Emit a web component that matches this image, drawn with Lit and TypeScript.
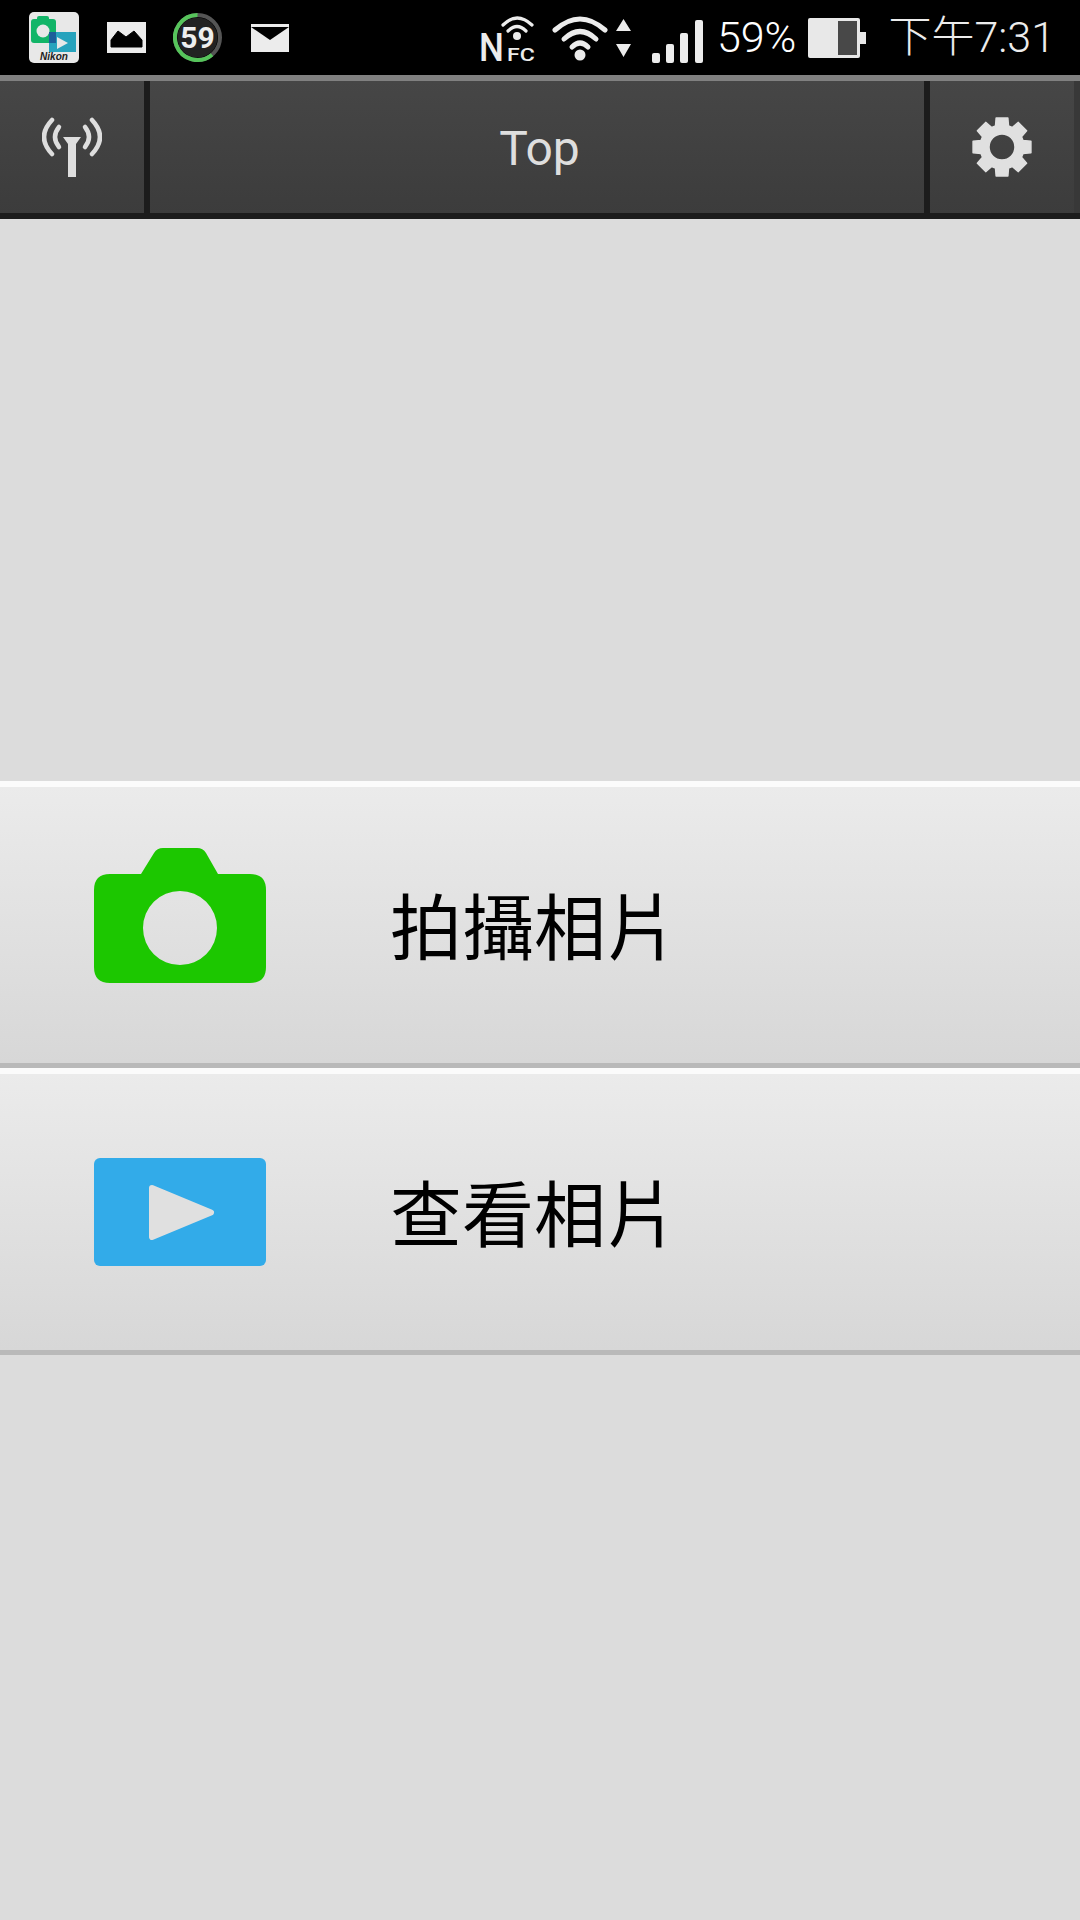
import { LitElement, html, css } from "lit";
import { customElement } from "lit/decorators.js";

function gearPath(cx: number, cy: number, ro: number, ri: number, hole: number) {
  const pts: string[] = [];
  const n = 8;
  for (let i = 0; i < n; i++) {
    const a = (i * 2 * Math.PI) / n - Math.PI / 2;
    const t = 0.2;
    const r = 0.3;
    const p = (rad: number, ang: number) =>
      `${(cx + rad * Math.cos(ang)).toFixed(2)} ${(cy + rad * Math.sin(ang)).toFixed(2)}`;
    pts.push(p(ri, a - r), p(ro, a - t), p(ro, a + t), p(ri, a + r));
  }
  return (
    `M${pts.join("L")}Z` +
    `M${cx - hole} ${cy}a${hole} ${hole} 0 1 0 ${hole * 2} 0a${hole} ${hole} 0 1 0 ${-hole * 2} 0Z`
  );
}

@customElement("app-root")
export class AppRoot extends LitElement {
  static styles = css`
    :host {
      display: flex;
      flex-direction: column;
      width: 1080px;
      height: 1920px;
      background: #dcdcdc;
      overflow: hidden;
      font-family: Roboto, "Noto Sans CJK TC", sans-serif;
    }
    .status {
      height: 75px;
      background: #000;
      display: flex;
      align-items: center;
      color: #ececec;
      flex: none;
    }
    .status svg { display: block; flex: none; }
    .nikon { margin-left: 29px; position: relative; width: 50px; height: 51px; flex: none; }
    .nikon-label {
      position: absolute;
      left: 0;
      right: 0;
      bottom: 1px;
      text-align: center;
      font: italic 700 10px/10px "Liberation Sans", sans-serif;
      color: #222;
    }
    .pic { margin-left: 28px; }
    .ring { margin-left: 27px; }
    .mail { margin-left: 29px; }
    .nfc { margin-left: auto; overflow: visible; }
    .wifi { margin-left: 18px; }
    .arrows { margin-left: 8px; }
    .signal { margin-left: 21px; margin-top: 8px; }
    .pct {
      margin-left: 14px;
      font-size: 43px;
      font-weight: 300;
      line-height: 75px;
      color: #fff;
    }
    .battery { margin-left: 12px; }
    .time {
      margin-left: 22px;
      margin-right: 25px;
      font-size: 43px;
      font-weight: 300;
      line-height: 75px;
    }
    .rule { height: 6px; background: #808080; flex: none; }
    .bar {
      height: 132px;
      border-bottom: 6px solid #1c1c1c;
      display: flex;
      flex: none;
      background: linear-gradient(#464646, #3c3c3c);
    }
    .bar svg { display: block; }
    .side { display: flex; align-items: center; justify-content: center; flex: none; }
    .side.left { width: 144px; border-right: 6px solid #1c1c1c; }
    .side.right { width: 144px; border-left: 6px solid #1c1c1c; border-right: 6px solid #383838; }
    .title {
      flex: 1;
      padding-left: 5px;
      text-align: center;
      font-size: 48px;
      line-height: 136px;
      color: #dedede;
    }
    .spacer { height: 562px; flex: none; }
    .row {
      height: 276px;
      border-top: 6px solid #fbfbfb;
      border-bottom: 5px solid #b9b9b9;
      background: linear-gradient(#ebebeb, #d7d7d7);
      display: flex;
      align-items: center;
      padding-left: 94px;
      flex: none;
    }
    .row svg { display: block; flex: none; }
    .label {
      margin-left: 124px;
      margin-bottom: 5px;
      font-family: "Noto Sans CJK TC", sans-serif;
      font-size: 72px;
      color: #000;
    }
  `;

  render() {
    return html`
      <div class="status">
        <div class="nikon">
          <svg width="50" height="51" viewBox="0 0 50 51">
            <rect width="50" height="51" rx="5" fill="#e8e8e8" />
            <rect x="2" y="7" width="25" height="24" rx="3" fill="#12b568" />
            <rect x="8" y="4" width="12" height="6" rx="2" fill="#12b568" />
            <circle cx="14" cy="19" r="6.5" fill="#e8e8e8" />
            <rect x="20" y="20" width="27" height="20" fill="#27a3bd" />
            <rect x="20" y="20" width="7" height="11" fill="#1c5f9a" />
            <path d="M28 25 L39 31 L28 37Z" fill="#e8e8e8" />
          </svg>
          <span class="nikon-label">Nikon</span>
        </div>
        <svg class="pic" width="39" height="31" viewBox="0 0 39 31">
          <rect width="39" height="31" fill="#ececec" />
          <path d="M4 25 V18 L11 9 L19 15 L27 9 L35 18 V25Z" fill="#000" stroke="#000" stroke-linejoin="round" />
        </svg>
        <svg class="ring" width="49" height="51" viewBox="0 0 49 51">
          <circle cx="24.5" cy="25.5" r="22.5" fill="none" stroke="#555" stroke-width="4" />
          <circle cx="24.5" cy="25.5" r="20" fill="#222" />
          <path d="M24.5 3 A22.5 22.5 0 1 0 39 42.7" fill="none" stroke="#56c45b" stroke-width="4" />
          <text x="24.5" y="36" text-anchor="middle" font-family="Roboto" font-weight="700" font-size="30" fill="#eee">59</text>
        </svg>
        <svg class="mail" width="38" height="28" viewBox="0 0 38 28">
          <rect width="38" height="28" fill="#ececec" />
          <path d="M0 3 H38 L19 16Z" fill="#000" />
        </svg>
        <svg class="nfc" width="52" height="48" viewBox="0 0 52 48">
          <g fill="none" stroke="#ececec" stroke-width="3.2" stroke-linecap="round">
            <path d="M21 11 Q35 -3 50 11" />
            <path d="M26 17 Q35 8 44 17" />
          </g>
          <circle cx="35" cy="22" r="4" fill="#ececec" />
          <text transform="translate(-3 47) scale(0.9 1)" font-family="Roboto" font-weight="500" font-size="39" fill="#ececec">N</text>
          <text transform="translate(25 47) scale(1.28 1)" font-family="Roboto" font-weight="500" font-size="18" fill="#ececec">FC</text>
        </svg>
        <svg class="wifi" width="56" height="46" viewBox="0 0 56 46">
          <g fill="none" stroke="#ececec" stroke-width="5" stroke-linecap="round">
            <path d="M3 15 Q28 -7 53 15" />
            <path d="M12 24 Q28 9 44 24" />
            <path d="M20 32 Q28 24 36 32" />
          </g>
          <circle cx="28" cy="40" r="5.5" fill="#ececec" />
        </svg>
        <svg class="arrows" width="15" height="38" viewBox="0 0 15 38">
          <path d="M7.5 0 L15 12 H0Z M0 25 H15 L7.5 38Z" fill="#ececec" />
        </svg>
        <svg class="signal" width="51" height="43" viewBox="0 0 51 43">
          <g fill="#ececec">
            <rect x="0" y="33" width="8" height="10" rx="2" />
            <rect x="14" y="24" width="8" height="19" rx="2" />
            <rect x="28" y="13" width="8" height="30" rx="2" />
            <rect x="43" y="0" width="8" height="43" rx="2" />
          </g>
        </svg>
        <span class="pct">59%</span>
        <svg class="battery" width="58" height="40" viewBox="0 0 58 40">
          <rect width="52" height="40" rx="2" fill="#e8e8e8" />
          <rect x="52" y="14" width="6" height="12" fill="#e8e8e8" />
          <rect x="30" y="3" width="19" height="34" fill="#484848" />
        </svg>
        <span class="time">下午7:31</span>
      </div>
      <div class="rule"></div>
      <div class="bar">
        <div class="side left">
          <svg width="60" height="60" viewBox="0 0 60 60">
            <g fill="none" stroke="#dedede" stroke-width="4.5" stroke-linecap="round">
              <path d="M10 3 Q-6 20 10 37" />
              <path d="M17 10 Q9 20 17 30" />
              <path d="M50 3 Q66 20 50 37" />
              <path d="M43 10 Q51 20 43 30" />
            </g>
            <path d="M21 20 H39 L34 27 V60 H26 V27Z" fill="#dedede" />
          </svg>
        </div>
        <div class="title">Top</div>
        <div class="side right">
          <svg width="64" height="64" viewBox="0 0 64 64">
            <path d="${gearPath(32, 32, 29.5, 22, 13)}" fill="#e0e0e0" fill-rule="evenodd" stroke="#e0e0e0" stroke-width="1.5" stroke-linejoin="round" />
          </svg>
        </div>
      </div>
      <div class="spacer"></div>
      <div class="row">
        <svg width="172" height="172" viewBox="0 0 172 172">
          <path fill="#1cc700" fill-rule="evenodd" d="M14 35 H47 L60 14 Q63 9 69 9 H103 Q109 9 112 14 L124 35 H156 Q172 35 172 51 V128 Q172 144 156 144 H16 Q0 144 0 128 V51 Q0 35 16 35Z M49 89 a37 37 0 1 0 74 0 a37 37 0 1 0 -74 0Z" />
        </svg>
        <span class="label">拍攝相片</span>
      </div>
      <div class="row">
        <svg width="172" height="172" viewBox="0 0 172 172">
          <rect x="0" y="32" width="172" height="108" rx="6" fill="#32abe9" />
          <path d="M58 62 L117 86.5 L58 111Z" fill="#e0e0e0" stroke="#e0e0e0" stroke-width="6" stroke-linejoin="round" />
        </svg>
        <span class="label">查看相片</span>
      </div>
    `;
  }
}
